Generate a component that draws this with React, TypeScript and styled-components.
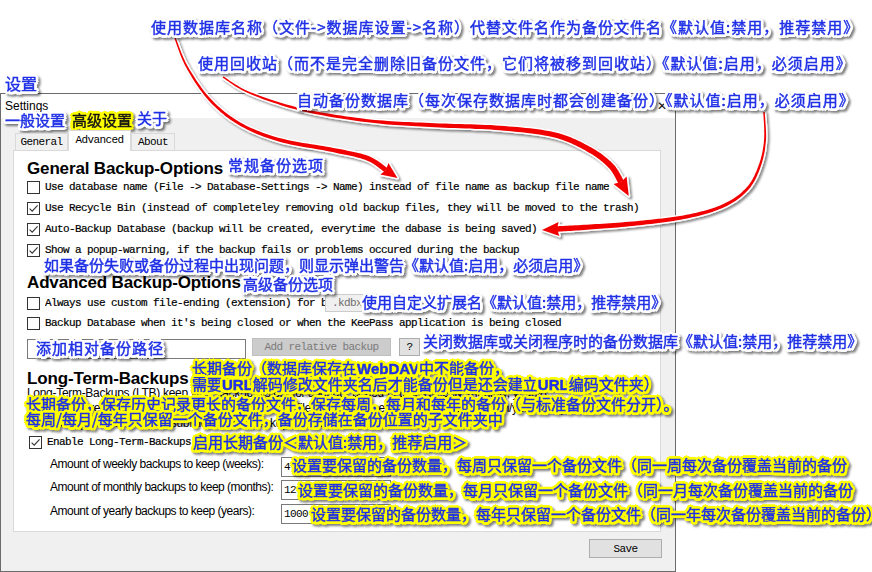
import React from 'react';
import styled, { createGlobalStyle } from 'styled-components';

const Global = createGlobalStyle`
  html, body { margin: 0; padding: 0; background: #ffffff; }
  body { width: 872px; height: 572px; overflow: hidden; }
`;

const Page = styled.div`
  position: relative;
  width: 872px;
  height: 572px;
  background: #ffffff;
  overflow: hidden;
  display: flex;
  flex-direction: column;
`;

const TopSpace = styled.div`
  height: 93px;
  flex: none;
`;

const Window = styled.div`
  width: 676px;
  height: 479px;
  box-sizing: border-box;
  border: 1px solid #6b6b6b;
  background: #f0f0f0;
  display: flex;
  flex-direction: column;
  flex: none;
`;

const TitleBar = styled.div`
  height: 24px;
  background: #ffffff;
  display: flex;
  align-items: center;
  justify-content: space-between;
  padding: 0 8px 0 4px;
  font: 12px 'Liberation Sans', Arial, sans-serif;
  color: #000;
`;

const CloseGlyph = styled.span`
  font: 12px 'DejaVu Sans', sans-serif;
  color: #111;
`;

const Body = styled.div`
  flex: 1;
  display: flex;
  flex-direction: column;
  padding: 12px 13px 0 12px;
`;

const TabStrip = styled.div`
  display: flex;
  align-items: flex-end;
  height: 21px;
  padding-left: 2px;
  margin-bottom: -1px;
  position: relative;
  z-index: 1;
`;

const Tab = styled.div<{ $w: number; $active?: boolean }>`
  width: ${p => p.$w}px;
  height: ${p => (p.$active ? 21 : 17)}px;
  margin-bottom: ${p => (p.$active ? 0 : 1)}px;
  box-sizing: border-box;
  border: 1px solid #d9d9d9;
  border-bottom: none;
  background: ${p => (p.$active ? '#ffffff' : '#f0f0f0')};
  display: flex;
  align-items: center;
  justify-content: center;
  padding-bottom: ${p => (p.$active ? 2 : 0)}px;
  font: 11px 'Liberation Mono', monospace;
  letter-spacing: -0.6px;
  color: #000;
`;

const Panel = styled.div`
  width: 648px;
  height: 382px;
  box-sizing: border-box;
  border: 1px solid #d9d9d9;
  background: #ffffff;
  padding-left: 13px;
  display: flex;
  flex-direction: column;
`;

const SectionTitle = styled.div<{ $mt: number }>`
  margin-top: ${p => p.$mt}px;
  height: 20px;
  font: bold 17px/20px 'Liberation Sans', Arial, sans-serif;
  letter-spacing: -0.15px;
  color: #000;
`;

const CheckRow = styled.div<{ $mt: number; $h?: number; $indent?: number }>`
  margin-top: ${p => p.$mt}px;
  height: ${p => p.$h ?? 16}px;
  padding-left: ${p => p.$indent ?? 0}px;
  display: flex;
  align-items: center;
`;

const Box = styled.span`
  width: 13px;
  height: 13px;
  box-sizing: border-box;
  border: 1px solid #333333;
  background: #ffffff;
  flex: none;
  display: flex;
`;

const OptionText = styled.span<{ $clip?: number }>`
  margin-left: 5px;
  font: 11px/14px 'Liberation Mono', monospace;
  letter-spacing: -0.6px;
  color: #000;
  white-space: nowrap;
  -webkit-text-stroke: 0.2px #000;
  ${p => (p.$clip ? `width: ${p.$clip}px; overflow: hidden; flex: none;` : '')}
`;

const ExtBox = styled.span`
  width: 60px;
  height: 18px;
  box-sizing: border-box;
  border: 1px solid #cccccc;
  background: #f0f0f0;
  font: 11px/16px 'Liberation Mono', monospace;
  letter-spacing: -0.6px;
  color: #6d6d6d;
  padding-left: 6px;
  flex: none;
`;

const InputRow = styled.div<{ $mt: number }>`
  margin-top: ${p => p.$mt}px;
  height: 21px;
  display: flex;
  align-items: flex-start;
`;

const TextBox = styled.div<{ $w: number; $mt?: number }>`
  width: ${p => p.$w}px;
  height: 20px;
  margin-top: ${p => p.$mt ?? 0}px;
  box-sizing: border-box;
  border: 1px solid #7a7a7a;
  background: #ffffff;
  font: 11px/16px 'Liberation Mono', monospace;
  letter-spacing: -0.6px;
  color: #000;
  padding: 1px 0 0 2px;
  flex: none;
`;

const DlgButton = styled.div<{ $w: number; $h?: number; $ml?: number; $disabled?: boolean }>`
  width: ${p => p.$w}px;
  height: ${p => p.$h ?? 18}px;
  margin-left: ${p => p.$ml ?? 0}px;
  box-sizing: border-box;
  border: 1px solid ${p => (p.$disabled ? '#bfbfbf' : '#adadad')};
  background: ${p => (p.$disabled ? '#cccccc' : '#e1e1e1')};
  color: ${p => (p.$disabled ? '#7a7a7a' : '#000')};
  font: 11px 'Liberation Mono', monospace;
  letter-spacing: -0.6px;
  display: flex;
  align-items: center;
  justify-content: center;
  flex: none;
`;

const Description = styled.div`
  margin-top: -3px;
  height: 45px;
  font: 12px/15px 'Liberation Sans', Arial, sans-serif;
  letter-spacing: -0.3px;
  color: #000;
  white-space: nowrap;
  overflow: hidden;
`;

const AmountRow = styled.div<{ $mt: number }>`
  margin-top: ${p => p.$mt}px;
  height: 20px;
  padding-left: 23px;
  display: flex;
  align-items: flex-start;
`;

const AmountLabel = styled.span`
  width: 231px;
  flex: none;
  font: 12px/14px 'Liberation Sans', Arial, sans-serif;
  letter-spacing: -0.5px;
  color: #000;
  white-space: nowrap;
`;

const Footer = styled.div`
  margin-top: 7px;
  display: flex;
  justify-content: flex-end;
`;

const Overlay = styled.div`
  position: absolute;
  inset: 0;
  pointer-events: none;
`;

const ArrowLayer = styled.svg`
  position: absolute;
  left: 0;
  top: 0;
  overflow: visible;
`;

const ring = (c: string) =>
  [
    [-2, 0], [2, 0], [0, -2], [0, 2], [-2, -1], [-2, 1], [2, -1], [2, 1], [-1, -2], [1, -2], [-1, 2], [1, 2],
    [-2, -2], [2, -2], [-2, 2], [2, 2], [-3, 0], [3, 0], [0, 3], [0, -3], [-2.5, -1.5], [2.5, 1.5], [-2.5, 1.5], [2.5, -1.5],
    [-1.5, -2.5], [1.5, 2.5], [-1.5, 2.5], [1.5, -2.5],
  ]
    .map(([x, y]) => `${x}px ${y}px 0 ${c}`)
    .join(', ');

const Callout = styled.div<{
  $x: number;
  $y: number;
  $yellow?: boolean;
  $size?: number;
  $ls?: number;
  $lh?: number;
  $ink?: string;
}>`
  position: absolute;
  left: ${p => p.$x}px;
  top: ${p => p.$y}px;
  white-space: nowrap;
  font-family: 'Noto Sans CJK SC', sans-serif;
  font-weight: 400;
  -webkit-text-stroke: 0.45px ${p => p.$ink ?? '#1f30e6'};
  font-size: ${p => p.$size ?? 15}px;
  line-height: ${p => p.$lh ?? 18}px;
  letter-spacing: ${p => p.$ls ?? 0}px;
  color: ${p => p.$ink ?? '#1f30e6'};
  text-shadow: ${p => ring(p.$yellow ? '#ffff00' : '#ffffff')};
  filter: drop-shadow(2px 2px 1.3px rgba(0, 0, 0, 0.5));
`;

const Latin = styled.span`
  font-family: 'Liberation Sans', Arial, sans-serif;
  font-weight: bold;
  letter-spacing: 0;
`;

function CheckBox({ checked }: { checked: boolean }) {
  return (
    <Box>
      {checked && (
        <svg width="11" height="11" viewBox="0 0 11 11">
          <path d="M1.6 5.6 L4.2 8.2 L9.6 2.4" fill="none" stroke="#333" strokeWidth="1.1" />
        </svg>
      )}
    </Box>
  );
}

type Pt = [number, number];

function catmull(points: Pt[], steps = 14): Pt[] {
  const out: Pt[] = [];
  const n = points.length;
  for (let i = 0; i < n - 1; i++) {
    const p0 = points[i === 0 ? 0 : i - 1];
    const p1 = points[i];
    const p2 = points[i + 1];
    const p3 = points[i + 2 < n ? i + 2 : n - 1];
    for (let s = 0; s < steps; s++) {
      const t = s / steps;
      const t2 = t * t;
      const t3 = t2 * t;
      const f = (a: number, b: number, c: number, d: number) =>
        0.5 * (2 * b + (-a + c) * t + (2 * a - 5 * b + 4 * c - d) * t2 + (-a + 3 * b - 3 * c + d) * t3);
      out.push([f(p0[0], p1[0], p2[0], p3[0]), f(p0[1], p1[1], p2[1], p3[1])]);
    }
  }
  out.push(points[n - 1]);
  return out;
}

function arrowPaths(points: Pt[], w0: number, w1: number, headLen: number, headW: number) {
  const pts = catmull(points);
  const L: number[] = [0];
  for (let i = 1; i < pts.length; i++) {
    L.push(L[i - 1] + Math.hypot(pts[i][0] - pts[i - 1][0], pts[i][1] - pts[i - 1][1]));
  }
  const total = L[L.length - 1];
  const left: Pt[] = [];
  const right: Pt[] = [];
  pts.forEach((p, i) => {
    const a = pts[Math.max(i - 1, 0)];
    const b = pts[Math.min(i + 1, pts.length - 1)];
    let dx = b[0] - a[0];
    let dy = b[1] - a[1];
    const d = Math.hypot(dx, dy) || 1;
    dx /= d;
    dy /= d;
    const w = (w0 + (w1 - w0) * Math.pow(L[i] / total, 0.9)) / 2;
    left.push([p[0] - dy * w, p[1] + dx * w]);
    right.push([p[0] + dy * w, p[1] - dx * w]);
  });
  const fmt = (p: Pt) => `${p[0].toFixed(1)},${p[1].toFixed(1)}`;
  const body = 'M' + left.map(fmt).join('L') + 'L' + right.reverse().map(fmt).join('L') + 'Z';
  const e = pts[pts.length - 1];
  const pe = pts[pts.length - 3];
  let dx = e[0] - pe[0];
  let dy = e[1] - pe[1];
  const d = Math.hypot(dx, dy) || 1;
  dx /= d;
  dy /= d;
  const tip: Pt = [e[0] + dx * headLen, e[1] + dy * headLen];
  const back: Pt = [e[0] - dx * 2, e[1] - dy * 2];
  const b1: Pt = [back[0] - dy * headW / 2, back[1] + dx * headW / 2];
  const b2: Pt = [back[0] + dy * headW / 2, back[1] - dx * headW / 2];
  const head = `M${fmt(tip)}L${fmt(b1)}L${fmt(e)}L${fmt(b2)}Z`;
  return { body, head };
}

const ARROWS: { pts: Pt[]; w0: number; w1: number; hl: number; hw: number }[] = [
  {
    pts: [[175, 38], [187, 67], [210, 100], [240, 124], [280, 140], [333, 150], [367, 158], [386, 170]],
    w0: 1.4, w1: 5, hl: 14, hw: 14,
  },
  {
    pts: [[223, 77], [250, 93], [303, 110], [370, 121], [430, 125], [500, 128], [555, 135], [590, 150], [611, 166], [621, 182]],
    w0: 1.4, w1: 6, hl: 16, hw: 15,
  },
  {
    pts: [[764, 112], [765, 140], [760, 165], [748, 188], [725, 205], [690, 216], [640, 223], [590, 227], [557, 229]],
    w0: 1.4, w1: 5.5, hl: 15, hw: 14,
  },
];

function Arrows() {
  const shapes = ARROWS.map(a => arrowPaths(a.pts, a.w0, a.w1, a.hl, a.hw));
  return (
    <ArrowLayer width="872" height="572" viewBox="0 0 872 572">
      <defs>
        <filter id="arrowShadow" x="-10%" y="-10%" width="120%" height="120%">
          <feDropShadow dx="2" dy="2" stdDeviation="1.3" floodColor="#000" floodOpacity="0.45" />
        </filter>
      </defs>
      <g filter="url(#arrowShadow)">
        {shapes.map((s, i) => (
          <g key={`w${i}`} fill="#ffffff" stroke="#ffffff" strokeWidth="3" strokeLinejoin="round">
            <path d={s.body} />
            <path d={s.head} />
          </g>
        ))}
        {shapes.map((s, i) => (
          <g key={`r${i}`} fill="#f20000">
            <path d={s.body} />
            <path d={s.head} />
          </g>
        ))}
      </g>
    </ArrowLayer>
  );
}

export default function App() {
  return (
    <>
      <Global />
      <Page>
        <TopSpace />
        <Window>
          <TitleBar>
            <span>Settings</span>
            <CloseGlyph>✕</CloseGlyph>
          </TitleBar>
          <Body>
            <TabStrip>
              <Tab $w={53}>General</Tab>
              <Tab $w={63} $active>Advanced</Tab>
              <Tab $w={44}>About</Tab>
            </TabStrip>
            <Panel>
              <SectionTitle $mt={8}>General Backup-Options</SectionTitle>
              <CheckRow $mt={0}>
                <CheckBox checked={false} />
                <OptionText>Use database name (File -&gt; Database-Settings -&gt; Name) instead of file name as backup file name</OptionText>
              </CheckRow>
              <CheckRow $mt={5}>
                <CheckBox checked />
                <OptionText>Use Recycle Bin (instead of completeley removing old backup files, they will be moved to the trash)</OptionText>
              </CheckRow>
              <CheckRow $mt={5}>
                <CheckBox checked />
                <OptionText>Auto-Backup Database (backup will be created, everytime the dabase is being saved)</OptionText>
              </CheckRow>
              <CheckRow $mt={5}>
                <CheckBox checked />
                <OptionText>Show a popup-warning, if the backup fails or problems occured during the backup</OptionText>
              </CheckRow>

              <SectionTitle $mt={15}>Advanced Backup-Options</SectionTitle>
              <CheckRow $mt={1} $h={18}>
                <CheckBox checked={false} />
                <OptionText $clip={280}>Always use custom file-ending (extension) for backups</OptionText>
                <ExtBox>.kdbx</ExtBox>
              </CheckRow>
              <CheckRow $mt={3}>
                <CheckBox checked={false} />
                <OptionText>Backup Database when it's being closed or when the KeePass application is being closed</OptionText>
              </CheckRow>
              <InputRow $mt={7}>
                <TextBox $w={219} $mt={1} />
                <DlgButton $w={139} $ml={6} $disabled>Add relative backup</DlgButton>
                <DlgButton $w={21} $ml={8}>?</DlgButton>
              </InputRow>

              <SectionTitle $mt={10}>Long-Term-Backups</SectionTitle>
              <Description>
                Long-Term-Backups (LTB) keep your backup history for a longer period of time (weekly, monthly, yearly).
                <br />
                They are stored separately from the standard backup files and only one backup per week/month/year is kept.
                <br />
                The backups are stored in a subfolder of the backup location.
              </Description>
              <CheckRow $mt={3} $indent={2}>
                <CheckBox checked />
                <OptionText>Enable Long-Term-Backups</OptionText>
              </CheckRow>
              <AmountRow $mt={7}>
                <AmountLabel>Amount of weekly backups to keep (weeks):</AmountLabel>
                <TextBox $w={110}>4</TextBox>
              </AmountRow>
              <AmountRow $mt={3}>
                <AmountLabel>Amount of monthly backups to keep (months):</AmountLabel>
                <TextBox $w={110}>12</TextBox>
              </AmountRow>
              <AmountRow $mt={4}>
                <AmountLabel>Amount of yearly backups to keep (years):</AmountLabel>
                <TextBox $w={110}>1000</TextBox>
              </AmountRow>
            </Panel>
            <Footer>
              <DlgButton $w={73} $h={19}>Save</DlgButton>
            </Footer>
          </Body>
        </Window>

        <Overlay>
          <Arrows />
          <Callout $x={5} $y={74} $size={16}>设置</Callout>
          <Callout $x={5} $y={111}>一般设置</Callout>
          <Callout $x={72} $y={111} $yellow $ink="#141414">高级设置</Callout>
          <Callout $x={137} $y={109}>关于</Callout>
          <Callout $x={151} $y={18} $ls={1}>
            使用数据库名称（文件-&gt;数据库设置-&gt;名称）代替文件名作为备份文件名《默认值:禁用，推荐禁用》
          </Callout>
          <Callout $x={198} $y={54} $ls={1}>
            使用回收站（而不是完全删除旧备份文件，它们将被移到回收站）《默认值:启用，必须启用》
          </Callout>
          <Callout $x={297} $y={91} $ls={1}>
            自动备份数据库（每次保存数据库时都会创建备份）《默认值:启用，必须启用》
          </Callout>
          <Callout $x={228} $y={156} $ls={1}>常规备份选项</Callout>
          <Callout $x={44} $y={256}>如果备份失败或备份过程中出现问题，则显示弹出警告《默认值:启用，必须启用》</Callout>
          <Callout $x={243} $y={275}>高级备份选项</Callout>
          <Callout $x={362} $y={293}>使用自定义扩展名《默认值:禁用，推荐禁用》</Callout>
          <Callout $x={36} $y={339} $ls={1}>添加相对备份路径</Callout>
          <Callout $x={423} $y={332}>关闭数据库或关闭程序时的备份数据库《默认值:禁用，推荐禁用》</Callout>
          <Callout $x={192} $y={360} $lh={15} $yellow>
            长期备份（数据库保存在<Latin>WebDAV</Latin>中不能备份，
            <br />
            需要<Latin>URL</Latin>解码修改文件夹名后才能备份但是还会建立<Latin>URL</Latin>编码文件夹）
          </Callout>
          <Callout $x={26} $y={396} $lh={15} $yellow>
            长期备份，保存历史记录更长的备份文件，保存每周，每月和每年的备份（与标准备份文件分开）。
            <br />
            每周/每月/每年只保留一个备份文件，备份存储在备份位置的子文件夹中
          </Callout>
          <Callout $x={193} $y={433} $yellow>启用长期备份＜默认值:禁用，推荐启用＞</Callout>
          <Callout $x={292} $y={456} $yellow>设置要保留的备份数量，每周只保留一个备份文件（同一周每次备份覆盖当前的备份</Callout>
          <Callout $x={298} $y={481} $yellow>设置要保留的备份数量，每月只保留一个备份文件（同一月每次备份覆盖当前的备份</Callout>
          <Callout $x={311} $y={505} $yellow>设置要保留的备份数量，每年只保留一个备份文件（同一年每次备份覆盖当前的备份）</Callout>
        </Overlay>
      </Page>
    </>
  );
}
